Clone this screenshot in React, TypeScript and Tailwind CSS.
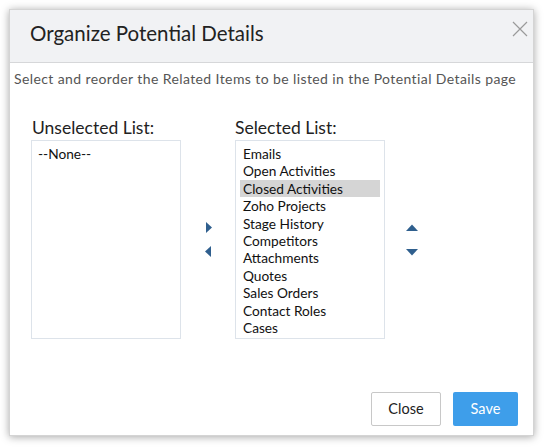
import React from "react";

const items = [
  "Emails",
  "Open Activities",
  "Closed Activities",
  "Zoho Projects",
  "Stage History",
  "Competitors",
  "Attachments",
  "Quotes",
  "Sales Orders",
  "Contact Roles",
  "Cases",
];

const font = { fontFamily: "Lato, 'Open Sans', sans-serif" };

export default function App() {
  return (
    <div className="w-[544px] h-[448px] bg-white pt-[9px] pl-[9px]" style={font}>
      <div className="w-[525px] h-[427px] bg-white border border-[#d4d4d4] shadow-[0_1px_8px_rgba(0,0,0,0.35)] flex flex-col">
        <div className="h-[53px] bg-[#f1f2f4] border-b border-[#d6d7d9] flex items-center justify-between pl-[20px] pr-[4px] pb-[5px]">
          <span className="text-[20.5px] text-[#222]">Organize Potential Details</span>
          <svg width="18" height="18" viewBox="0 0 18 18" className="mb-[9px]">
            <path d="M2 2 L16 16 M16 2 L2 16" stroke="#9a9a9a" strokeWidth="1.2" fill="none" />
          </svg>
        </div>
        <div className="pl-[4px] pt-[5px] text-[14px] tracking-[0.4px] text-[#555]">
          Select and reorder the Related Items to be listed in the Potential Details page
        </div>
        <div className="flex pl-[21px] pt-[29px]">
          <div className="flex flex-col">
            <span className="text-[17.5px] text-[#222] leading-[20px] ml-[1px]">Unselected List:</span>
            <div className="mt-[2px] w-[150px] h-[199px] border border-[#dde3ea] px-[6px] py-[3px] text-[13.7px] text-[#111]">
              --None--
            </div>
          </div>
          <div className="w-[54px] flex flex-col items-center pt-[104px] gap-[13px]">
            <svg width="7" height="11" viewBox="0 0 7 11">
              <path d="M1 0 L7 5.5 L1 11 Z" fill="#2f5f8e" />
            </svg>
            <svg width="7" height="11" viewBox="0 0 7 11">
              <path d="M6 0 L0 5.5 L6 11 Z" fill="#2f5f8e" />
            </svg>
          </div>
          <div className="flex flex-col">
            <span className="text-[17.5px] text-[#222] leading-[20px]">Selected List:</span>
            <div className="mt-[2px] w-[150px] h-[199px] border border-[#dde3ea] px-[4px] pt-[4px] text-[13.7px] text-[#111]">
              {items.map((it) => (
                <div
                  key={it}
                  className={
                    "h-[17.4px] leading-[17.4px] pl-[3px] " +
                    (it === "Closed Activities" ? "bg-[#d5d5d5]" : "")
                  }
                >
                  {it}
                </div>
              ))}
            </div>
          </div>
          <div className="w-[53px] flex flex-col items-center pt-[106px] gap-[18px]">
            <svg width="12" height="7" viewBox="0 0 12 7">
              <path d="M0 7 L6 0.5 L12 7 Z" fill="#2f5f8e" />
            </svg>
            <svg width="12" height="7" viewBox="0 0 12 7">
              <path d="M0 0 L6 6.5 L12 0 Z" fill="#2f5f8e" />
            </svg>
          </div>
        </div>
        <div className="flex-1" />
        <div className="flex justify-end gap-[12px] pr-[15px] pb-[9px]">
          <button className="w-[70px] h-[34px] border border-[#c8c8c8] rounded-[2px] bg-white text-[14.5px] text-[#222]">
            Close
          </button>
          <button className="w-[65px] h-[34px] rounded-[2px] bg-[#3e9eea] text-[14.5px] text-white">
            Save
          </button>
        </div>
      </div>
    </div>
  );
}
